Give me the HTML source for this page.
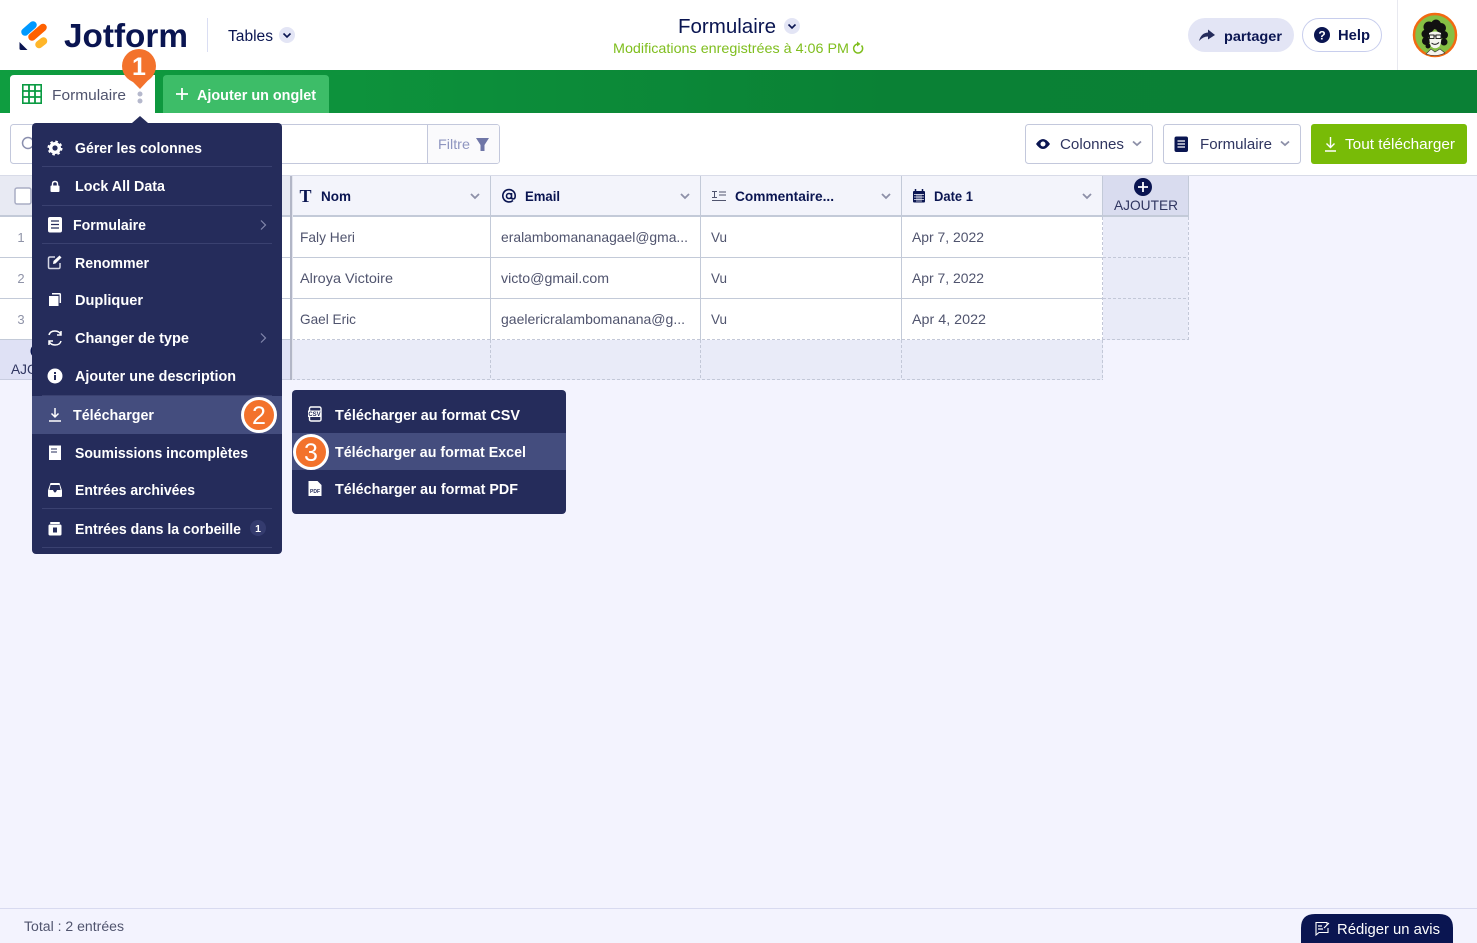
<!DOCTYPE html>
<html lang="fr">
<head>
<meta charset="utf-8">
<title>Formulaire</title>
<style>
html,body{margin:0;padding:0;background:#f3f3fe;width:1477px;height:943px;overflow:hidden}
svg{display:block}
text{font-family:"Liberation Sans",sans-serif}
.b{font-weight:700}
.m text{font-weight:700;font-size:14.5px;fill:#fff}
.c text{font-size:14px;fill:#50546e}
.h text{font-weight:700;font-size:14px;fill:#0a1551}
.chev{fill:none;stroke:#8d90a8;stroke-width:1.8}
.w{fill:none;stroke:#fff;stroke-width:1.5}
</style>
</head>
<body>
<svg xmlns="http://www.w3.org/2000/svg" width="1477" height="943" viewBox="0 0 1477 943">
<defs>
<linearGradient id="g" x1="0" x2="1" y1="0" y2="0"><stop offset="0" stop-color="#0f9d40"/><stop offset=".6" stop-color="#0a8135"/><stop offset="1" stop-color="#0a8035"/></linearGradient>
</defs>
<rect width="1477" height="943" fill="#f3f3fe"/>

<!-- top bar -->
<rect width="1477" height="70" fill="#fff"/>
<g fill="none" stroke-linecap="round" stroke-width="7.500">
<path d="M25 32L33 25" stroke="#0099ff"/>
<path d="M32 37L43 27.500" stroke="#ff6100"/>
<path d="M39 44.500L43.500 41" stroke="#ffb629"/>
</g>
<path d="M19.500 42L27.500 50H21Q19.500 50 19.500 48.500Z" fill="#0a1551"/>
<text x="64" y="47" class="b" font-size="33" fill="#0a1551" textLength="124" lengthAdjust="spacingAndGlyphs">Jotform</text>
<rect x="207" y="18" width="1" height="34" fill="#dadef3"/>
<text x="228" y="41" font-size="15.500" fill="#0a1551" textLength="45" lengthAdjust="spacingAndGlyphs">Tables</text>
<circle cx="287" cy="35" r="8" fill="#e3e5f5"/>
<path d="M283.500 33.500L287 37L290.500 33.500" fill="none" stroke="#0a1551" stroke-width="1.600"/>
<text x="678" y="33" font-size="20" fill="#0a1551" textLength="98" lengthAdjust="spacingAndGlyphs">Formulaire</text>
<circle cx="792" cy="26" r="8" fill="#e3e5f5"/>
<path d="M788.500 24.500L792 28L795.500 24.500" fill="none" stroke="#0a1551" stroke-width="1.600"/>
<text x="613" y="53" font-size="14" fill="#7fbe1e" textLength="236" lengthAdjust="spacingAndGlyphs">Modifications enregistrées à 4:06 PM</text>
<path d="M861.500 45.500A4.500 4.500 0 1 1 858 44" fill="none" stroke="#7fbe1e" stroke-width="1.500"/>
<path d="M857 41.500L860.500 44L857 46.500Z" fill="#7fbe1e"/>

<rect x="1188" y="18" width="106" height="34" rx="17" fill="#e3e5f5"/>
<path d="M1199 41Q1201 33 1208 32.500V29.500L1215 35L1208 39.500V36.500Q1203 36.500 1199 41Z" fill="#252c5b"/>
<text x="1224" y="41" class="b" font-size="14" fill="#0a1551" textLength="58" lengthAdjust="spacingAndGlyphs">partager</text>
<rect x="1302.500" y="18.500" width="79" height="33" rx="16.500" fill="#fff" stroke="#c8ceed"/>
<circle cx="1322" cy="35" r="8" fill="#0a1551"/>
<text x="1322" y="39.500" class="b" font-size="12" fill="#fff" text-anchor="middle">?</text>
<text x="1338" y="40" class="b" font-size="14.500" fill="#0a1551" textLength="32" lengthAdjust="spacingAndGlyphs">Help</text>
<rect x="1397" width="1" height="70" fill="#e8e9f0"/>

<!-- avatar -->
<circle cx="1435" cy="35" r="21" fill="#86bf44" stroke="#f26a12" stroke-width="2.500"/>
<g fill="#111">
<circle cx="1429" cy="27" r="5.500"/><circle cx="1436" cy="24.500" r="5"/><circle cx="1441" cy="28" r="5"/>
<circle cx="1426" cy="34" r="4.500"/><circle cx="1444" cy="35" r="4"/><circle cx="1426" cy="41" r="4"/><circle cx="1444" cy="42" r="3.500"/>
<circle cx="1428" cy="46" r="2.500"/>
</g>
<path d="M1429 33Q1435 30 1441 33Q1442 42 1439.500 46.500Q1435 50 1431 46.500Q1429 42 1429 33Z" fill="#f4f4ee"/>
<path d="M1429.500 35H1434V38.500H1429.500ZM1436 35H1441V38.500H1436ZM1434 36H1436M1431.500 43Q1435 46 1439 42.500" stroke="#222" stroke-width="1" fill="none"/>
<path d="M1426 54L1431 49L1435 52L1440 49L1445 53Q1436 57.500 1426 54Z" fill="#f4f4ee" stroke="#333" stroke-width=".6"/>

<!-- green bar -->
<rect y="70" width="1477" height="43" fill="url(#g)"/>
<path d="M10 113V79Q10 75 14 75H155V113Z" fill="#fff"/>
<path d="M163 113V79Q163 75 167 75H325Q329 75 329 79V113Z" fill="#3dbd68"/>
<rect x="22.800" y="84.800" width="18.400" height="18.400" fill="none" stroke="#0a9b42" stroke-width="1.600"/>
<path d="M23 91H41M23 97H41M29 85V103M35 85V103" stroke="#0a9b42" stroke-width="1.800"/>
<text x="52" y="100" font-size="14.500" fill="#50546e" textLength="74" lengthAdjust="spacingAndGlyphs">Formulaire</text>
<circle cx="140" cy="94" r="2.500" fill="#b5b8cc"/>
<circle cx="140" cy="101" r="2.500" fill="#b5b8cc"/>
<path d="M176 94H188M182 88V100" stroke="#fff" stroke-width="1.800"/>
<text x="197" y="100" class="b" font-size="14.500" fill="#fff" textLength="119" lengthAdjust="spacingAndGlyphs">Ajouter un onglet</text>

<!-- toolbar -->
<rect y="113" width="1477" height="62" fill="#fff"/>
<rect y="175" width="1477" height="1" fill="#d8dbe8"/>
<rect x="10.500" y="124.500" width="489" height="39" rx="3" fill="#fff" stroke="#c3c8dc"/>
<path d="M427 125H497Q499 125 499 127V161Q499 163 497 163H427Z" fill="#fafafc"/>
<rect x="427" y="124" width="1" height="40" fill="#c3c8dc"/>
<circle cx="28" cy="143" r="5.500" fill="none" stroke="#8a8fae" stroke-width="1.500"/>
<text x="438" y="149" font-size="14" fill="#8f96c0" textLength="32" lengthAdjust="spacingAndGlyphs">Filtre</text>
<path d="M476 138H489L484.500 145V151L480.500 151V145Z" fill="#6f76a7"/>

<rect x="1025.500" y="124.500" width="127" height="39" rx="3" fill="#fff" stroke="#c3c8dc"/>
<path d="M1036 144Q1043 134 1050 144Q1043 154 1036 144Z" fill="#0a1551"/>
<circle cx="1043" cy="144" r="2.500" fill="#fff"/>
<text x="1060" y="149" font-size="15" fill="#2f3560" textLength="64" lengthAdjust="spacingAndGlyphs">Colonnes</text>
<path class="chev" d="M1133 141.500L1137 145L1141 141.500"/>
<rect x="1163.500" y="124.500" width="137" height="39" rx="3" fill="#fff" stroke="#c3c8dc"/>
<rect x="1174.500" y="136.500" width="13.500" height="15.500" rx="2" fill="#0a1551"/>
<path d="M1177.500 141H1185M1177.500 144H1185M1177.500 147H1185" stroke="#fff" stroke-width="1.200"/>
<text x="1200" y="149" font-size="15" fill="#2f3560" textLength="72" lengthAdjust="spacingAndGlyphs">Formulaire</text>
<path class="chev" d="M1281 141.500L1285 145L1289 141.500"/>
<rect x="1311" y="124" width="156" height="40" rx="3" fill="#78bb07"/>
<path d="M1330.500 137V147M1326.500 143.500L1330.500 147.500L1334.500 143.500M1325 151H1336" fill="none" stroke="#fff" stroke-width="1.400"/>
<text x="1345" y="149" font-size="15" fill="#fff" textLength="110" lengthAdjust="spacingAndGlyphs">Tout télécharger</text>

<!-- table left -->
<rect y="176" width="290" height="40" fill="#e8eaf3"/>
<rect y="217" width="290" height="123" fill="#fff"/>
<rect y="340" width="290" height="40" fill="#dfe1f5"/>
<rect y="379" width="292" height="1" fill="#c9cde0"/>
<rect x="15" y="188" width="16" height="16" rx="2" fill="#fff" stroke="#a9adc4" stroke-width="1.500"/>
<g font-size="13" fill="#8f93a8">
<text x="21" y="242" text-anchor="middle">1</text>
<text x="21" y="283" text-anchor="middle">2</text>
<text x="21" y="324" text-anchor="middle">3</text>
</g>
<text x="11" y="374" font-size="14" fill="#2f3560" textLength="64" lengthAdjust="spacingAndGlyphs">AJOUTER</text>
<circle cx="38" cy="351" r="7.500" fill="#0a1551"/>

<!-- table header -->
<rect x="292" y="176" width="811" height="40" fill="#f3f4fb"/>
<rect x="1103" y="176" width="85" height="40" fill="#d9dcef"/>
<rect y="215" width="1189" height="2" fill="#c3cad8"/>
<!-- rows -->
<rect x="292" y="217" width="811" height="123" fill="#fff"/>
<rect x="292" y="340" width="811" height="40" fill="#e9ebf8"/>
<rect x="1103" y="217" width="85" height="123" fill="#e9ebf8"/>
<path d="M0 257.500H1103M0 298.500H1103" stroke="#c3cad8"/>
<rect x="0" y="339" width="292" height="1" fill="#c3cad8"/>
<path d="M292 339.500H1189M292 379.500H1103M1103 257.500H1189M1103 298.500H1189M1188.500 217V340M1102.500 340V380M901.500 340V380M700.500 340V380M490.500 340V380M1102.500 217V340" stroke="#c3c8d8" stroke-dasharray="3 2" fill="none"/>
<path d="M490.500 176V340M700.500 176V340M901.500 176V340M1102.500 176V216M1188.500 176V216" stroke="#c3cad8"/>
<rect x="290" y="176" width="2" height="204" fill="#b2b6c6"/>
<rect x="292" y="176" width="1" height="204" fill="#e3e5ee"/>

<g class="h">
<text x="321" y="201" textLength="30" lengthAdjust="spacingAndGlyphs">Nom</text>
<text x="525" y="201" textLength="35" lengthAdjust="spacingAndGlyphs">Email</text>
<text x="735" y="201" textLength="99" lengthAdjust="spacingAndGlyphs">Commentaire...</text>
<text x="934" y="201" textLength="39" lengthAdjust="spacingAndGlyphs">Date 1</text>
</g>
<text x="299.500" y="202" style="font-family:'Liberation Serif',serif" font-weight="700" font-size="18" fill="#0a1551">T</text>
<path d="M513 200.500A6.200 6.200 0 1 1 515.200 196Q515.200 199 513 199Q511.500 199 511.500 197V193M511.500 196A2.500 2.500 0 1 1 506.500 196A2.500 2.500 0 1 1 511.500 196Z" fill="none" stroke="#0a1551" stroke-width="1.600"/>
<path d="M712 191.500H717M714.500 191.500V197.500M712 197.500H717M719 192H726M719 195H726M712 200.500H726" stroke="#50546e" stroke-width="1"/>
<rect x="913" y="191" width="12" height="11.500" rx="1" fill="#0a1551"/>
<path d="M915.500 189V192M922.500 189V192" stroke="#0a1551" stroke-width="1.500"/>
<path d="M914 194.500H924M914 197H924M914 199.500H924M917 194V202M919 194V202M921 194V202" stroke="#f3f4fb" stroke-width=".7"/>
<path class="chev" d="M471 194L475 198L479 194M681 194L685 198L689 194M882 194L886 198L890 194M1083 194L1087 198L1091 194"/>
<circle cx="1143" cy="187" r="9" fill="#0a1551"/>
<path d="M1138 187H1148M1143 182V192" stroke="#fff" stroke-width="1.800"/>
<text x="1114" y="210" font-size="14" fill="#2f3560" textLength="64" lengthAdjust="spacingAndGlyphs">AJOUTER</text>

<g class="c">
<text x="300" y="242" textLength="55" lengthAdjust="spacingAndGlyphs">Faly Heri</text>
<text x="300" y="283" textLength="93" lengthAdjust="spacingAndGlyphs">Alroya Victoire</text>
<text x="300" y="324" textLength="56" lengthAdjust="spacingAndGlyphs">Gael Eric</text>
<text x="501" y="242" textLength="187" lengthAdjust="spacingAndGlyphs">eralambomananagael@gma...</text>
<text x="501" y="283" textLength="108" lengthAdjust="spacingAndGlyphs">victo@gmail.com</text>
<text x="501" y="324" textLength="184" lengthAdjust="spacingAndGlyphs">gaelericralambomanana@g...</text>
<text x="711" y="242" textLength="16" lengthAdjust="spacingAndGlyphs">Vu</text>
<text x="711" y="283" textLength="16" lengthAdjust="spacingAndGlyphs">Vu</text>
<text x="711" y="324" textLength="16" lengthAdjust="spacingAndGlyphs">Vu</text>
<text x="912" y="242" textLength="72" lengthAdjust="spacingAndGlyphs">Apr 7, 2022</text>
<text x="912" y="283" textLength="72" lengthAdjust="spacingAndGlyphs">Apr 7, 2022</text>
<text x="912" y="324" textLength="74" lengthAdjust="spacingAndGlyphs">Apr 4, 2022</text>
</g>

<!-- main menu -->
<path d="M132 123L140 116L148 123Z" fill="#252c5b"/>
<rect x="32" y="123" width="250" height="431" rx="4" fill="#252c5b"/>
<rect x="32" y="396" width="250" height="38" fill="#444d7e"/>
<path d="M42 166.500H272M42 205.500H272M42 243.500H272M42 395.500H272M42 508.500H272M42 547.500H272" stroke="#3a4170"/>
<g class="m">
<text x="75" y="153" textLength="127" lengthAdjust="spacingAndGlyphs">Gérer les colonnes</text>
<text x="75" y="191" textLength="90" lengthAdjust="spacingAndGlyphs">Lock All Data</text>
<text x="73" y="230" textLength="73" lengthAdjust="spacingAndGlyphs">Formulaire</text>
<text x="75" y="268" textLength="74" lengthAdjust="spacingAndGlyphs">Renommer</text>
<text x="75" y="305" textLength="68" lengthAdjust="spacingAndGlyphs">Dupliquer</text>
<text x="75" y="343" textLength="114" lengthAdjust="spacingAndGlyphs">Changer de type</text>
<text x="75" y="381" textLength="161" lengthAdjust="spacingAndGlyphs">Ajouter une description</text>
<text x="73" y="420" textLength="81" lengthAdjust="spacingAndGlyphs">Télécharger</text>
<text x="75" y="458" textLength="173" lengthAdjust="spacingAndGlyphs">Soumissions incomplètes</text>
<text x="75" y="495" textLength="120" lengthAdjust="spacingAndGlyphs">Entrées archivées</text>
<text x="75" y="534" textLength="166" lengthAdjust="spacingAndGlyphs">Entrées dans la corbeille</text>
</g>
<!-- menu icons -->
<circle cx="55" cy="148" r="4.300" fill="none" stroke="#fff" stroke-width="3.400"/>
<circle cx="55" cy="148" r="6.600" fill="none" stroke="#fff" stroke-width="1.800" stroke-dasharray="2.600 2.600"/>
<rect x="50.500" y="185.500" width="9" height="6.500" rx="1" fill="#fff"/>
<path d="M52.500 186V184Q52.500 181.500 55 181.500Q57.500 181.500 57.500 184V186" fill="none" stroke="#fff" stroke-width="1.400"/>
<rect x="48" y="217" width="14" height="15.500" rx="2" fill="#fff"/>
<path d="M51 221H59M51 224.500H59M51 228H59" stroke="#252c5b" stroke-width="1.300"/>
<path d="M60 263V267Q60 268.500 58.500 268.500H50Q48.500 268.500 48.500 267V258.500Q48.500 257 50 257H55" fill="none" stroke="#d5d7e5" stroke-width="1.500"/>
<path d="M53 264L53.500 261L59.500 255.500L61.500 257.500L55.500 263.500Z" fill="#fff"/>
<rect x="49" y="296" width="9.500" height="10" fill="#fff"/>
<path d="M52 293.800H59.500Q60.300 293.800 60.300 294.600V303" class="w"/>
<path d="M49 335Q50 331 55 331Q59 331 61 334.500M61 331V335H57M61 341Q60 345 55 345Q51 345 49 341.500M49 345V341H53" class="w"/>
<circle cx="55" cy="376" r="7.500" fill="#fff"/>
<rect x="54" y="375" width="2" height="5" fill="#252c5b"/>
<rect x="54" y="372" width="2" height="2" fill="#252c5b"/>
<path d="M55 408V416.500M51.500 413.500L55 417L58.500 413.500M49 421H61" class="w"/>
<rect x="49" y="445.500" width="12" height="14.500" fill="#fff"/>
<path d="M51 449H57M51 452H57" stroke="#252c5b" stroke-width="1"/>
<path d="M48 496V490.500L50.500 483H59.500L62 490.500V496Q62 497 61 497H49Q48 497 48 496Z" fill="#fff"/>
<path d="M50.500 485H59.500L60.500 490H57Q56 492.500 55 492.500Q54 492.500 53 490H49.500Z" fill="#252c5b"/>
<rect x="48.500" y="524.500" width="13" height="11" rx="1.500" fill="#fff"/>
<rect x="50" y="522" width="10" height="2" rx="1" fill="#fff"/>
<rect x="53" y="527.500" width="4" height="5" fill="#252c5b"/>
<path d="M261 220.500L265.500 225L261 229.500M261 333.500L265.500 338L261 342.500" fill="none" stroke="#8388ad" stroke-width="1.200"/>
<circle cx="258" cy="528" r="8" fill="#343b6e"/>
<text x="258" y="532" class="b" font-size="10.500" fill="#fff" text-anchor="middle">1</text>

<!-- submenu -->
<rect x="292" y="390" width="274" height="124" rx="4" fill="#252c5b"/>
<rect x="292" y="433" width="274" height="37" fill="#444d7e"/>
<g class="m">
<text x="335" y="420" textLength="185" lengthAdjust="spacingAndGlyphs">Télécharger au format CSV</text>
<text x="335" y="457" textLength="191" lengthAdjust="spacingAndGlyphs">Télécharger au format Excel</text>
<text x="335" y="494" textLength="183" lengthAdjust="spacingAndGlyphs">Télécharger au format PDF</text>
</g>
<rect x="309.500" y="407" width="11.500" height="14" rx="1.500" fill="none" stroke="#fff" stroke-width="1.400"/>
<rect x="308" y="410.500" width="13" height="6.500" fill="#fff"/>
<text x="314.500" y="416" class="b" font-size="6" fill="#252c5b" text-anchor="middle">CSV</text>
<path d="M308.500 481H317.500L321.500 485V496H308.500Z" fill="#fff"/>
<text x="315" y="493" class="b" font-size="5" fill="#252c5b" text-anchor="middle">PDF</text>

<!-- pins -->
<path d="M126 75L140 89L153 75Z" fill="#f3722c"/>
<circle cx="139" cy="66" r="17" fill="#f3722c"/>
<text x="139" y="75" font-size="25" class="b" fill="#fff" text-anchor="middle">1</text>
<circle cx="259" cy="415" r="16.500" fill="#f3722c" stroke="#fff" stroke-width="3"/>
<text x="259" y="424" font-size="25" fill="#fff" text-anchor="middle">2</text>
<circle cx="311" cy="452" r="16.500" fill="#f3722c" stroke="#fff" stroke-width="3"/>
<text x="311" y="461" font-size="25" fill="#fff" text-anchor="middle">3</text>

<!-- footer -->
<rect y="908" width="1477" height="1" fill="#d8daf0"/>
<text x="24" y="931" font-size="13.500" fill="#50546e" textLength="100" lengthAdjust="spacingAndGlyphs">Total : 2 entrées</text>
<path d="M1301 943V928Q1301 914 1315 914H1439Q1453 914 1453 928V943Z" fill="#0a1551"/>
<path d="M1327 925V922.500H1316V935L1319 932.500H1328V928" fill="none" stroke="#fff" stroke-width="1.100"/>
<path d="M1318 926H1322M1318 929H1323M1324 928L1329 923" stroke="#fff" stroke-width="1.200"/>
<text x="1337" y="934" font-size="15" fill="#fff" textLength="103" lengthAdjust="spacingAndGlyphs">Rédiger un avis</text>
</svg>
</body>
</html>
